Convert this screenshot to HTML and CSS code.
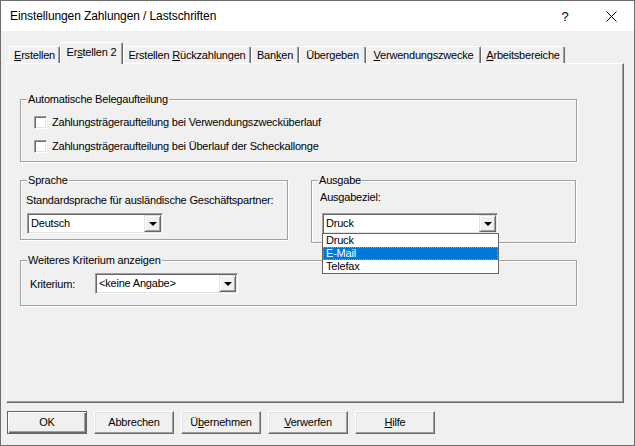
FILE: index.html
```html
<!DOCTYPE html>
<html lang="de">
<head>
<meta charset="utf-8">
<title>Einstellungen Zahlungen / Lastschriften</title>
<link rel="stylesheet" href="styles.css">
</head>
<body>
<div class="window">
  <div class="titlebar">
    <span class="title">Einstellungen Zahlungen / Lastschriften</span>
    <span class="cap-btn help">?</span>
    <span class="cap-btn close"><svg width="11" height="11" viewBox="0 0 11 11"><path d="M0.5 0.5 L10.5 10.5 M10.5 0.5 L0.5 10.5" stroke="#000" stroke-width="1" fill="none"/></svg></span>
  </div>
  <div class="tabs">
    <div class="tab t1"><u>E</u>rstellen</div>
    <div class="tab active t2">Er<u>s</u>tellen 2</div>
    <div class="tab t3">Erstellen <u>R</u>ückzahlungen</div>
    <div class="tab t4">Ban<u>k</u>en</div>
    <div class="tab t5">Übergeben</div>
    <div class="tab t6"><u>V</u>erwendungszwecke</div>
    <div class="tab t7"><u>A</u>rbeitsbereiche</div>
  </div>
  <div class="panel">
    <div class="group g1">
      <div class="group-title">Automatische Belegaufteilung</div>
      <div class="check-row r1"><span class="checkbox"></span><span>Zahlungsträgeraufteilung bei Verwendungszwecküberlauf</span></div>
      <div class="check-row r2"><span class="checkbox"></span><span>Zahlungsträgeraufteilung bei Überlauf der Scheckallonge</span></div>
    </div>
    <div class="row2">
      <div class="group g-sprache">
        <div class="group-title">Sprache</div>
        <div class="sprache-label">Standardsprache für ausländische Geschäftspartner:</div>
        <div class="combo c-sprache"><span class="combo-text">Deutsch</span><span class="combo-btn"><span class="arrow"></span></span></div>
      </div>
      <div class="group g-ausgabe">
        <div class="group-title">Ausgabe</div>
        <div class="ausgabe-label">Ausgabeziel:</div>
        <div class="combo c-ausgabe"><span class="combo-text">Druck</span><span class="combo-btn"><span class="arrow"></span></span>
          <div class="droplist">
            <div class="item">Druck</div>
            <div class="item selected">E-Mail</div>
            <div class="item">Telefax</div>
          </div>
        </div>
      </div>
    </div>
    <div class="group g3">
      <div class="group-title">Weiteres Kriterium anzeigen</div>
      <div class="krit-row">
        <span class="krit-label">Kriterium:</span>
        <div class="combo c-krit"><span class="combo-text">&lt;keine Angabe&gt;</span><span class="combo-btn"><span class="arrow"></span></span></div>
      </div>
    </div>
  </div>
  <div class="buttons">
    <div class="btn default">OK</div>
    <div class="btn">Abbrechen</div>
    <div class="btn">Ü<u>b</u>ernehmen</div>
    <div class="btn"><u>V</u>erwerfen</div>
    <div class="btn"><u>H</u>ilfe</div>
  </div>
</div>
</body>
</html>
```
FILE: styles.css
```css
* { box-sizing: border-box; }
html, body { margin: 0; padding: 0; }
body {
  font-family: "Liberation Sans", Arial, sans-serif;
  font-size: 11px;
  letter-spacing: -0.2px;
  color: #000;
  background: #f0f0f0;
}
.window {
  width: 635px;
  height: 446px;
  border: 1px solid #6e6e6e;
  background: #f0f0f0;
  display: flex;
  flex-direction: column;
}
.titlebar {
  height: 30px;
  background: #fff;
  display: flex;
  align-items: center;
  padding-left: 9px;
  font-size: 12px;
  letter-spacing: -0.1px;
  flex: none;
}
.title { flex: 1; }
.cap-btn {
  width: 46px;
  height: 30px;
  display: flex;
  align-items: center;
  justify-content: center;
}
.help { font-size: 13px; }
.close svg { display: block; }

.tabs {
  display: flex;
  align-items: flex-end;
  height: 21px;
  margin-top: 11px;
  padding-left: 8px;
  flex: none;
}
.tab {
  height: 17px;
  line-height: 13px;
  padding-top: 2px;
  text-align: center;
  white-space: nowrap;
  border-top: 1px solid #fff;
  border-left: 1px solid #fff;
  border-right: 1px solid #696969;
  box-shadow: inset -1px 0 0 #a0a0a0;
  border-radius: 2px 2px 0 0;
  background: #f0f0f0;
}
.tab.active {
  height: 22px;
  margin-bottom: -1px;
  padding-top: 3px;
  position: relative;
  z-index: 1;
}
.t1 { width: 51px; }
.t2 { width: 63px; }
.t3 { width: 128px; }
.t4 { width: 48px; }
.t5 { width: 67px; }
.t6 { width: 115px; }
.t7 { width: 84px; }

.panel {
  margin-left: 5px;
  width: 618px;
  height: 340px;
  flex: none;
  border-top: 1px solid #fff;
  border-left: 1px solid #fff;
  border-right: 1px solid #696969;
  border-bottom: 1px solid #696969;
  box-shadow: inset -1px -1px 0 #a0a0a0;
  padding: 35px 0 0 13px;
}
.group {
  border: 1px solid #a0a0a0;
  box-shadow: 1px 1px 0 #fff, inset 1px 1px 0 #fff;
  display: flex;
  flex-direction: column;
  align-items: flex-start;
}
.group-title {
  margin: -7px 0 0 6px;
  padding: 0 1px;
  line-height: 13px;
  background: #f0f0f0;
  white-space: nowrap;
}
.g1 { width: 557px; height: 63px; }
.check-row {
  display: flex;
  align-items: center;
  height: 13px;
  line-height: 13px;
  margin-left: 13px;
  gap: 5px;
  white-space: nowrap;
}
.r1 { margin-top: 10px; }
.r2 { margin-top: 11px; }
.checkbox {
  width: 13px;
  height: 13px;
  background: #fff;
  border-top: 1px solid #a0a0a0;
  border-left: 1px solid #a0a0a0;
  border-right: 1px solid #fff;
  border-bottom: 1px solid #fff;
  box-shadow: inset 1px 1px 0 #696969, inset -1px -1px 0 #e3e3e3;
  flex: none;
}
.row2 {
  display: flex;
  align-items: flex-start;
  gap: 23px;
  margin-top: 18px;
}
.g-sprache { width: 268px; height: 60px; }
.g-ausgabe { width: 265px; height: 63px; }
.sprache-label { margin: 7px 0 0 5px; line-height: 13px; white-space: nowrap; }
.ausgabe-label { margin: 4px 0 0 8px; line-height: 13px; }
.c-sprache { margin: 6px 0 0 6px; width: 136px; }
.c-ausgabe { margin: 9px 0 0 10px; width: 176px; }

.combo {
  height: 21px;
  background: #fff;
  border-top: 1px solid #a0a0a0;
  border-left: 1px solid #a0a0a0;
  border-right: 1px solid #fff;
  border-bottom: 1px solid #fff;
  box-shadow: inset 1px 1px 0 #696969, inset -1px -1px 0 #e3e3e3;
  padding: 1px;
  display: flex;
  align-items: stretch;
  position: relative;
}
.combo-text {
  flex: 1;
  padding-left: 2px;
  line-height: 17px;
  white-space: nowrap;
}
.combo-btn {
  width: 17px;
  background: #f0f0f0;
  border-top: 1px solid #e3e3e3;
  border-left: 1px solid #e3e3e3;
  border-right: 1px solid #696969;
  border-bottom: 1px solid #696969;
  box-shadow: inset 1px 1px 0 #fff, inset -1px -1px 0 #a0a0a0;
  display: flex;
  align-items: center;
  justify-content: center;
}
.arrow {
  width: 0;
  height: 0;
  border-left: 4px solid transparent;
  border-right: 4px solid transparent;
  border-top: 4px solid #000;
  margin-top: 1px;
}
.droplist {
  position: absolute;
  top: 100%;
  left: -1px;
  width: 177px;
  background: #fff;
  border: 1px solid #646464;
  z-index: 5;
}
.item {
  height: 13px;
  line-height: 13px;
  padding-left: 3px;
}
.item.selected {
  background: #0078d7;
  color: #fff;
  outline: 1px dotted #ff8728;
  outline-offset: -1px;
}

.g3 { width: 557px; height: 46px; margin-top: 17px; }
.krit-row {
  display: flex;
  align-items: center;
  margin: 6px 0 0 9px;
}
.krit-label { width: 65px; }
.c-krit { width: 143px; }

.buttons {
  display: flex;
  gap: 7px;
  margin: 8px 0 0 6px;
  flex: none;
}
.btn {
  width: 80px;
  height: 23px;
  line-height: 21px;
  text-align: center;
  background: #f0f0f0;
  border-top: 1px solid #fff;
  border-left: 1px solid #fff;
  border-right: 1px solid #696969;
  border-bottom: 1px solid #696969;
  box-shadow: inset -1px -1px 0 #a0a0a0, inset 1px 1px 0 #e3e3e3;
}
.btn.default {
  border: 1px solid #646464;
  box-shadow: inset 1px 1px 0 #fff, inset -1px -1px 0 #696969, inset -2px -2px 0 #a0a0a0;
}
```
